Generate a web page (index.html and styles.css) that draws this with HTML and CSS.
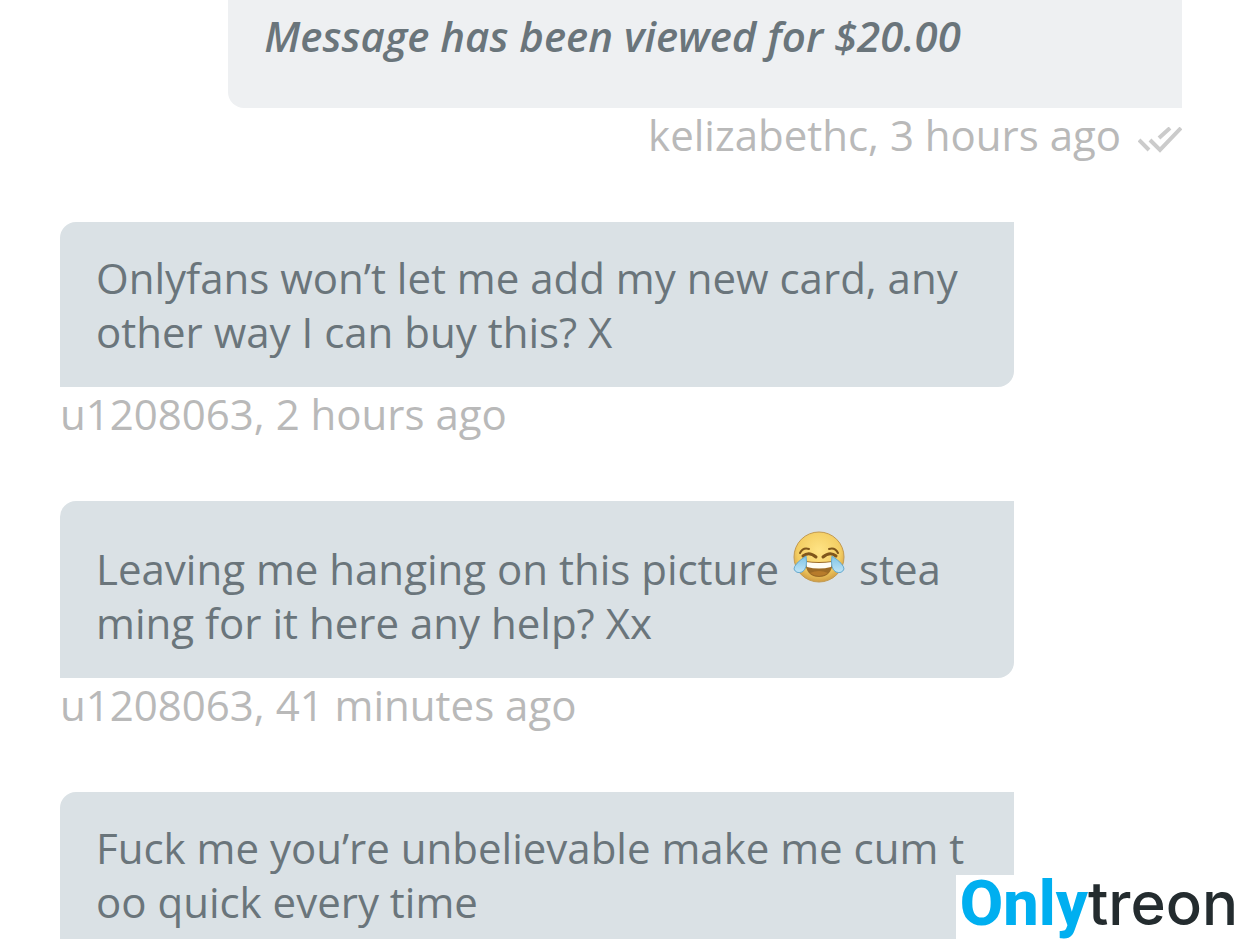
FILE: index.html
```html
<!DOCTYPE html>
<html lang="en">
<head>
<meta charset="utf-8">
<meta name="viewport" content="width=device-width, initial-scale=1">
<title>Messages</title>
<link rel="stylesheet" href="styles.css">
</head>
<body>
<main class="chat">
  <article class="message message-sent">
    <p class="bubble bubble-notice">Message has been viewed for $20.00</p>
    <p class="meta">kelizabethc, 3 hours ago
      <svg class="seen" viewBox="0 0 44 28" role="img" aria-label="Seen">
        <path d="M1 13L11 23M12 13L22 23L43 1M21 11L32 1" fill="none" stroke="#cbcbcb" stroke-width="4"/>
      </svg>
    </p>
  </article>
  <article class="message">
    <p class="bubble">Onlyfans won’t let me add my new card, any other way I can buy this? X</p>
    <p class="meta">u1208063, 2 hours ago</p>
  </article>
  <article class="message">
    <p class="bubble">Leaving me hanging on this picture <svg class="emoji" viewBox="0 0 52 52" role="img" aria-label="Face with tears of joy">
      <defs>
        <radialGradient id="face" cx="50%" cy="38%" r="62%">
          <stop offset="0" stop-color="#ffe486"/>
          <stop offset="0.7" stop-color="#f3cd62"/>
          <stop offset="1" stop-color="#d09c42"/>
        </radialGradient>
        <linearGradient id="tear" x1="0" y1="0" x2="0" y2="1">
          <stop offset="0" stop-color="#80c4e6"/>
          <stop offset="1" stop-color="#bfe4f6"/>
        </linearGradient>
      </defs>
      <circle cx="26" cy="26" r="25" fill="url(#face)" stroke="#c39a50"/>
      <path d="M7 22Q10 16 16 18M36 18Q42 16 45 22" fill="none" stroke="#80571b" stroke-width="2" stroke-linecap="round"/>
      <path d="M10 25Q16 20 23 26M30 26Q37 20 43 25" fill="none" stroke="#80571b" stroke-width="3" stroke-linecap="round"/>
      <path d="M12 30Q26 32 40 30Q39 46 26 46Q13 46 12 30Z" fill="#9b6a26"/>
      <path d="M13 31Q26 33 39 31L38 36Q26 39 14 36Z" fill="#fffdf4"/>
      <path d="M17 42Q26 38 35 42Q31 45 26 45Q21 45 17 42Z" fill="#b77b2b"/>
      <path d="M13 25Q15 38 9 41Q3 43 1 38Q1 33 13 25ZM39 25Q37 38 43 41Q49 43 51 38Q51 33 39 25Z" fill="url(#tear)" stroke="#64a9cf"/>
    </svg> steaming for it here any help? Xx</p>
    <p class="meta">u1208063, 41 minutes ago</p>
  </article>
  <article class="message">
    <p class="bubble">Fuck me you’re unbelievable make me cum too quick every time</p>
  </article>
</main>
<div class="brand"><span class="brand-only">Only</span><span class="brand-treon">treon</span></div>
</body>
</html>
```
FILE: styles.css
```css
* {
  box-sizing: border-box;
}

body {
  margin: 0;
  height: 100vh;
  overflow: hidden;
  background: #fff;
  color: #6a757b;
  font-family: "Open Sans", "Noto Sans", sans-serif;
  font-size: 42px;
  line-height: 54px;
}

.chat {
  display: flex;
  flex-direction: column;
  gap: 60px;
  padding: 0 60px;
}

.message {
  display: flex;
  flex-direction: column;
  align-items: flex-start;
}

.message-sent {
  align-items: flex-end;
}

.bubble {
  width: 85%;
  margin: 0;
  padding: 29px 36px 28px;
  border-radius: 16px 0;
  background: #dae1e5;
  word-break: break-all;
}

.bubble-notice {
  padding: 9px 36px 45px;
  border-radius: 0 0 0 16px;
  background: #eef0f2;
  font-style: italic;
  font-weight: 600;
}

.meta {
  margin: 0;
  color: #b9b9b9;
}

.seen {
  width: 44px;
  height: 28px;
  margin-left: 6px;
  vertical-align: -4px;
}

.emoji {
  width: 52px;
  height: 52px;
  margin: 1px 3px 0;
  vertical-align: 2px;
}

.brand {
  position: absolute;
  right: 0;
  bottom: 0;
  display: flex;
  align-items: baseline;
  height: 64px;
  padding: 0 4px;
  background: #fff;
  line-height: 56px;
}

.brand-only {
  color: #00aff0;
  font-family: Roboto, "Open Sans", sans-serif;
  font-size: 63px;
  font-weight: 800;
}

.brand-treon {
  color: #242c2f;
  font-family: Inter, "Open Sans", sans-serif;
  font-size: 60px;
  font-weight: 500;
}
```
